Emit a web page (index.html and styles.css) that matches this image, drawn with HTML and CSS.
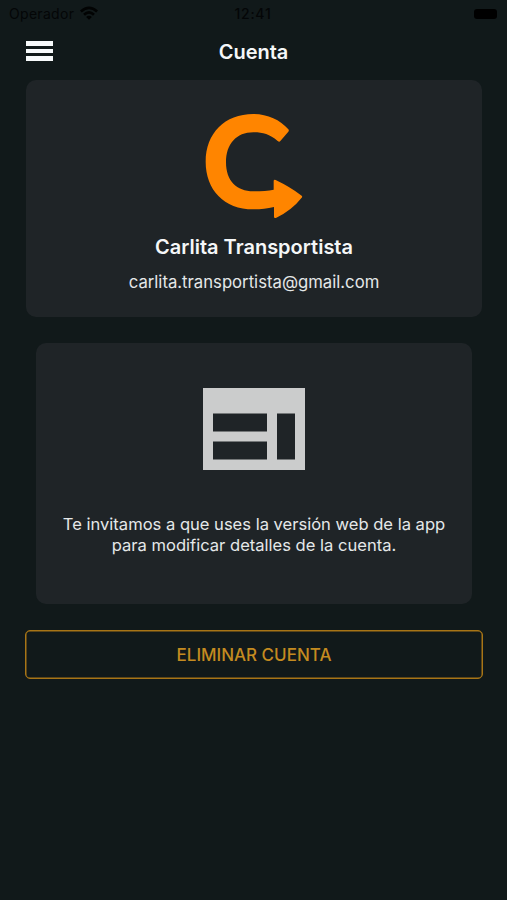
FILE: index.html
```html
<!DOCTYPE html>
<html lang="es">
<head>
<meta charset="utf-8">
<title>Cuenta</title>
<link rel="stylesheet" href="styles.css">
</head>
<body>
<div class="status">
  <div class="carrier"><span class="operator">Operador</span>
    <svg class="wifi" viewBox="0 0 18 14"><path d="M0 4.6Q9-3.6 18 4.6L16.2 6.5Q9-.2 1.8 6.5ZM3.1 7.8Q9 2.3 14.9 7.8L13 9.7Q9 6 5 9.7ZM6.1 10.9Q9 8.4 11.9 10.900L9 13.8Z"/></svg>
  </div>
  <span class="time">12:41</span>
  <span class="battery"></span>
</div>
<header class="header">
  <button class="menu" aria-label="Menú"><span></span><span></span><span></span></button>
  <h1 class="title">Cuenta</h1>
</header>
<main>
  <section class="card profile">
    <svg class="logo" viewBox="45 39 294 318"><path d="M295 88Q298 91 295 95L271 123Q268 127 263 123C238 102 218 97 190 97C139 97 108 132 108 187C108 243 140 274 190 274C215 274 234 272 251 269V242Q252 238 257 240Q301 261 335 287Q338 290 335 293Q306 330 259 353Q252 356 252 350V321C231 326 212 328 190 328C102 328 47 269 47 185C47 100 104 42 190 42C232 42 270 59 295 88Z"/></svg>
    <h2 class="name">Carlita Transportista</h2>
    <p class="email">carlita.transportista@gmail.com</p>
  </section>
  <section class="card notice">
    <svg class="web" viewBox="0 0 102 82"><path fill-rule="evenodd" d="M0 0H102V82H0ZM10 25.500V43.500H64V25.500ZM10 53.500V71.500H64V53.500ZM74 25.500V71.500H92V25.500Z"/></svg>
    <p class="message">Te invitamos a que uses la versión web de la app<br>para modificar detalles de la cuenta.</p>
  </section>
  <button class="delete">ELIMINAR CUENTA</button>
</main>
</body>
</html>
```
FILE: styles.css
```css
* { box-sizing: border-box; }
body { margin: 0; height: 900px; overflow: hidden; background: #11191a; color: #f5f7f8; font-family: Inter, "Liberation Sans", sans-serif; }
h1, h2, p { margin: 0; }
button { font: inherit; background: none; padding: 0; }
.status { height: 28px; padding: 0 10px 0 9px; display: grid; grid-template-columns: 1fr auto 1fr; align-items: center; color: #040607; font-size: 14px; line-height: 28px; }
.carrier { display: flex; align-items: center; gap: 6px; }
.operator { letter-spacing: .3px; }
.wifi { width: 18px; height: 14px; fill: #020303; margin-top: -2px; }
.time { font-weight: 500; letter-spacing: .7px; }
.battery { justify-self: end; width: 23px; height: 10px; border-radius: 3px; background: #000; }
.header { height: 52px; display: grid; grid-template-columns: 26px 1fr 26px; padding: 0 26px; }
.menu { border: 0; display: flex; flex-direction: column; gap: 3px; padding-top: 13px; }
.menu span { height: 4.500px; width: 26.500px; background: #f7fafb; }
.title { text-align: center; font-size: 20px; font-weight: 600; line-height: 49px; }
main { padding: 0 25px; }
.card { background: #1f2427; border-radius: 10px; display: flex; flex-direction: column; align-items: center; }
.profile { margin: 0 0 0 1px; height: 237px; padding-top: 33px; }
.logo { width: 98px; height: 106px; fill: #ff8500; }
.name { margin-top: 14px; font-size: 20px; font-weight: 600; line-height: 28px; }
.email { margin-top: 9px; font-size: 16.7px; line-height: 24px; color: #e5e8e9; }
.notice { margin: 26px 10px 0 11px; height: 261px; padding-top: 45px; }
.web { width: 102px; height: 82px; fill: #cbcccc; }
.message { margin-top: 44px; font-size: 16.56px; line-height: 20.5px; text-align: center; color: #e5e8e9; white-space: nowrap; }
.delete { display: block; width: 458px; height: 49px; margin-top: 26px; border: 1px solid #a87516; box-shadow: inset 0 0 0 .5px #a87516; border-radius: 5px; color: #c48b20; font-size: 17px; font-weight: 500; }
```
